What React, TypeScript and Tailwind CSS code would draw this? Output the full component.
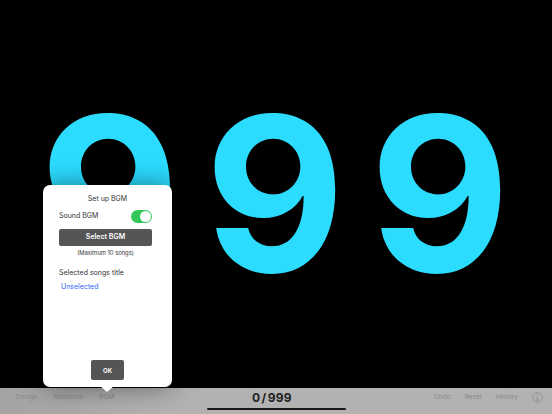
export default function App() {
  return (
    <div className="relative flex h-[414px] w-[552px] flex-col overflow-hidden bg-black font-['Inter',sans-serif]">
      <div className="flex h-[388px] items-start justify-center pr-[2px] pt-[66px]">
        {[0, 1, 2].map((i) => (
          <div key={i} className="w-[165px] text-center text-[216px] leading-[256px] font-bold text-[#2bdcff]">9</div>
        ))}
      </div>
      <div className="flex h-[26px] items-center justify-between bg-gradient-to-r from-[#a3a3a3] to-[#b2b2b2] to-[30%] pb-[7px] text-[6.5px] text-[#888888]">
        <div className="flex w-[180px] gap-[16px] pl-[16px]">
          <span>Design</span>
          <span>Maximum</span>
          <span>BGM</span>
        </div>
        <div className="pr-[8px] text-[12px] leading-none font-bold tracking-[0.3px] [word-spacing:-2px] text-[#222]">0 / 999</div>
        <div className="flex w-[180px] items-center justify-end gap-[14px] pr-[9px]">
          <span>Undo</span>
          <span>Reset</span>
          <span>History</span>
          <svg width="11" height="11" viewBox="0 0 11 11" fill="none" stroke="#8a8a8a" strokeWidth="0.8">
            <circle cx="5.5" cy="5.5" r="4.7" />
            <path d="M5.5 5v3M5.5 2.8v.9M4.6 5h.9M4.5 8.1h2" />
          </svg>
        </div>
      </div>
      <div className="absolute bottom-[4px] left-[207px] h-[2px] w-[139px] rounded-full bg-[#1a1a1a]" />
      <div className="absolute left-[43px] top-[185px] flex h-[202px] w-[129px] flex-col rounded-[7px] bg-white px-[16px] pb-[7px] text-[#333] shadow-[0_0_26px_rgba(0,0,0,0.45)]">
        <div className="pt-[9px] text-center text-[7px] leading-[10px]">Set up BGM</div>
        <div className="mt-[6px] flex h-[12px] items-center justify-between pr-[4px] text-[7px]">
          <span>Sound BGM</span>
          <span className="flex h-[13px] w-[21px] items-center justify-end rounded-full bg-[#34c759] pr-[1px]">
            <span className="h-[11px] w-[11px] rounded-full bg-white" />
          </span>
        </div>
        <div className="mt-[7px] flex h-[17px] w-[93px] items-center justify-center rounded-[2px] bg-[#555] text-[7px] font-semibold text-white">Select BGM</div>
        <div className="mt-[3px] w-[93px] text-center text-[5.8px] leading-[8px]">(Maximum 10 songs)</div>
        <div className="mt-[11px] text-[7px] leading-[10px]">Selected songs title</div>
        <div className="mt-[4px] pl-[2px] text-[7px] leading-[10px] text-[#2f5fff]">Unselected</div>
        <div className="mt-auto flex h-[20px] w-[33px] items-center justify-center self-center rounded-[2px] bg-[#555] text-[6px] font-bold text-white">OK</div>
        <div className="absolute -bottom-[5px] left-[57px] h-0 w-0 border-x-[7px] border-t-[6px] border-x-transparent border-t-white" />
      </div>
    </div>
  );
}
